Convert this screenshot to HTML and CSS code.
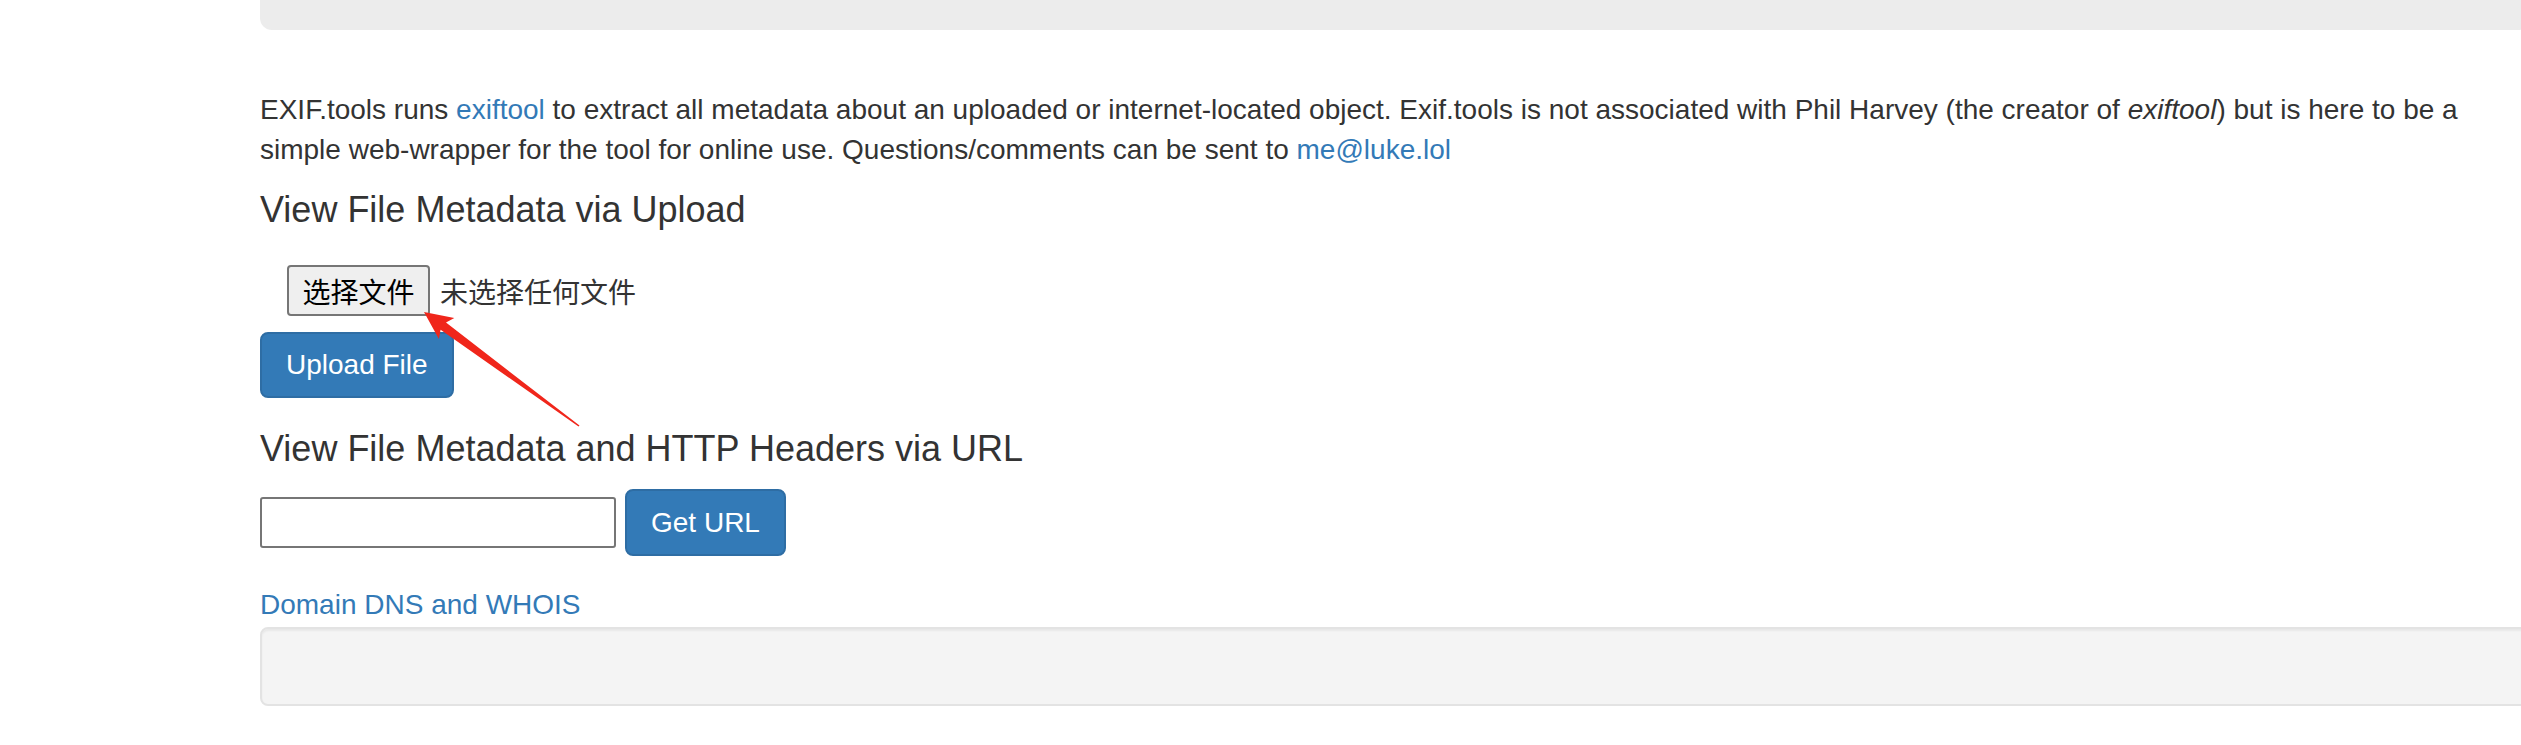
FILE: index.html
```html
<html>
    <head>
        <title>EXIF.tools</title>
        <meta name="viewport" content="width=device-width, initial-scale=1">
        <link rel="stylesheet" href="styles.css">
    </head>
    <body>
        <main class="container">
            <div class="jumbotron"></div>
            <p class="intro">
                EXIF.tools runs <a href="#">exiftool</a> to extract all metadata about an uploaded or internet-located object. Exif.tools is not associated with Phil Harvey (the creator of <em>exiftool</em>) but is here to be a simple web-wrapper for the tool for online use. Questions/comments can be sent to <a href="#">me@luke.lol</a>
            </p>

            <h4 class="title">View File Metadata via Upload</h4>
            <form class="upload">
                <div class="file-row">
                    <button type="button" class="file-btn">选择文件</button>
                    <span class="file-name">未选择任何文件</span>
                </div>
                <button type="submit" class="btn btn-upload">Upload File</button>
            </form>

            <h4 class="title title-url">View File Metadata and HTTP Headers via URL</h4>
            <form class="url-row">
                <input type="text" class="url-input">
                <button type="submit" class="btn btn-get">Get URL</button>
            </form>

            <a href="#" class="dns-link">Domain DNS and WHOIS</a>
            <div class="well"></div>
        </main>

        <svg class="arrow" width="2521" height="745" viewBox="0 0 2521 745">
            <polygon fill="#f0261b" points="424,312 454.3,318.1 446,322.6 579.5,425.5 578.5,426.6 440.6,329.8 438.9,339.1"/>
        </svg>
    </body>
</html>
```

FILE: styles.css
```css
body {
    margin: 0;
    overflow: hidden;
    background: white;
    font-family: "Liberation Sans", Arial, "Noto Sans CJK SC", sans-serif;
    font-size: 28px;
    line-height: 40px;
    color: #333;
}

a {
    color: #337ab7;
    text-decoration: none;
}

.container {
    margin-left: 260px;
    width: 2270px;
}

.jumbotron {
    height: 30px;
    background-color: #ececec;
    border-radius: 0 0 12px 12px;
}

.intro {
    margin: 60px 0 20px;
}

.title {
    margin: 0;
    font-size: 36px;
    line-height: 40px;
    font-weight: normal;
}

.title-url {
    margin-top: 31px;
}

.upload {
    margin: 0;
}

.file-row {
    display: flex;
    align-items: center;
    gap: 10px;
    margin: 35px 0 0 27px;
    height: 51px;
}

.file-btn {
    height: 51px;
    width: 143px;
    padding: 0;
    box-sizing: border-box;
    border: 2px solid #767676;
    border-radius: 4px;
    background-color: #efefef;
    color: black;
    font-family: "Noto Sans CJK SC", sans-serif;
    font-size: 28px;
}

.file-name {
    font-family: "Noto Sans CJK SC", sans-serif;
    font-size: 28px;
    color: #333;
}

.btn {
    display: block;
    box-sizing: border-box;
    background-color: #337ab7;
    border: 2px solid #2e6da4;
    border-radius: 8px;
    color: white;
    font-family: "Liberation Sans", Arial, sans-serif;
    font-size: 28px;
    padding: 0 24px;
}

.btn-upload {
    margin-top: 16px;
    height: 66px;
}

.url-row {
    display: flex;
    align-items: center;
    gap: 9px;
    margin: 20px 0 0;
}

.url-input {
    width: 356px;
    height: 51px;
    box-sizing: border-box;
    border: 2px solid #767676;
    border-radius: 3px;
    margin: 0;
}

.btn-get {
    height: 67px;
}

.dns-link {
    display: block;
    margin-top: 29px;
}

.well {
    margin-top: 2px;
    height: 79px;
    box-sizing: border-box;
    background-color: #f4f4f4;
    border: 2px solid #e3e3e3;
    border-radius: 8px;
    box-shadow: inset 0 2px 2px rgba(0, 0, 0, 0.05);
}

.arrow {
    position: absolute;
    top: 0;
    left: 0;
    pointer-events: none;
}
```
